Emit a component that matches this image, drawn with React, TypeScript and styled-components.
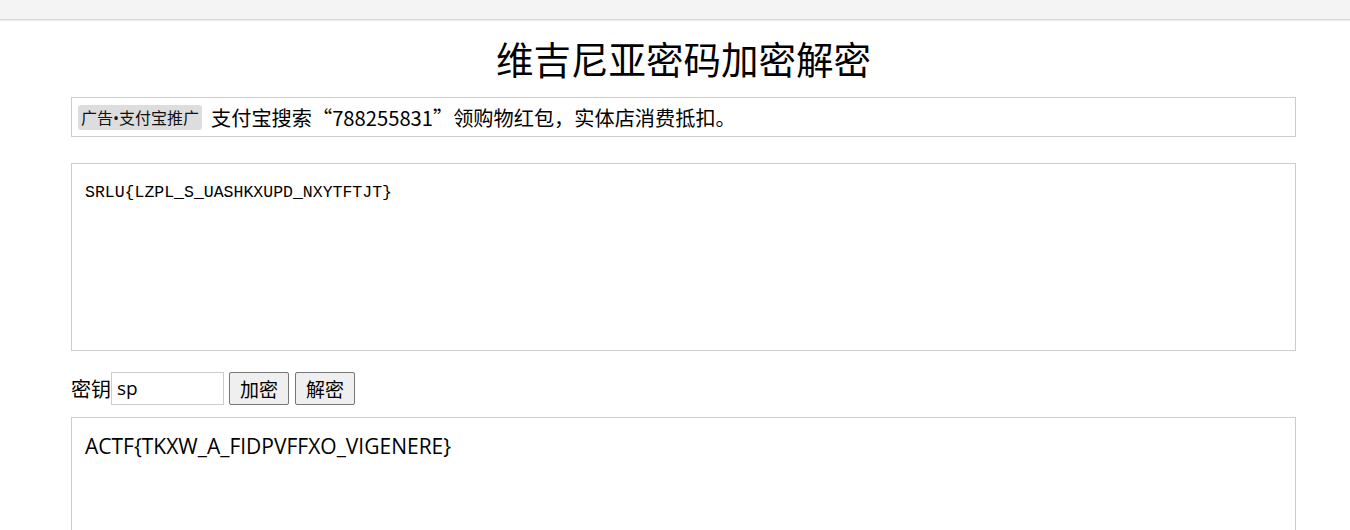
import React, { useState } from "react";
import styled, { createGlobalStyle } from "styled-components";

const GlobalStyle = createGlobalStyle`
  html, body { margin: 0; padding: 0; background: #fff; }
  body {
    font-family: "Noto Sans CJK SC", sans-serif;
    color: #000;
  }
`;

const TopBar = styled.div`
  height: 19px;
  background: #f4f4f4;
  border-bottom: 1px solid #d9d9d9;
  box-shadow: 0 1px 1px #eeeeee;
`;

const Container = styled.main`
  width: 1225px;
  margin-left: 71px;
  display: flex;
  flex-direction: column;
`;

const Title = styled.h1`
  margin: 8px 0 9px;
  height: 60px;
  font-family: "Noto Sans CJK SC", sans-serif;
  font-weight: 400;
  font-size: 37.5px;
  line-height: 60px;
  text-align: center;
`;

const AdBox = styled.div`
  height: 38px;
  border: 1px solid #cccccc;
  display: flex;
  align-items: center;
  padding: 0 6px;
  gap: 9px;
  font-family: "Noto Sans CJK SC", sans-serif;
  font-size: 20.2px;
  margin-bottom: 26px;
`;

const AdBadge = styled.span`
  background: #dddddd;
  border-radius: 3px;
  padding: 0 3px;
  height: 25px;
  display: flex;
  align-items: center;
  font-family: "Open Sans", "Noto Sans CJK SC", sans-serif;
  font-size: 16px;
  color: #111;
`;

const TextArea = styled.textarea<{ $serif?: boolean; $height: number }>`
  box-sizing: border-box;
  width: 1225px;
  height: ${(p) => p.$height}px;
  border: 1px solid #cccccc;
  padding: ${(p) => (p.$serif ? "18px 13px" : "14px 13px")};
  resize: none;
  outline: none;
  font-family: ${(p) =>
    p.$serif ? '"Liberation Mono", monospace' : '"Open Sans", "Noto Sans CJK SC", sans-serif'};
  font-size: ${(p) => (p.$serif ? "16.5px" : "21px")};
  line-height: ${(p) => (p.$serif ? "22px" : "28px")};
  color: #000;
  display: block;
`;

const KeyRow = styled.div`
  display: flex;
  align-items: center;
  height: 34px;
  margin: 20px 0 12px;
`;

const KeyLabel = styled.label`
  font-family: "Noto Sans CJK SC", sans-serif;
  font-size: 20px;
`;

const KeyInput = styled.input`
  box-sizing: border-box;
  width: 113px;
  height: 33px;
  border: 1px solid #cccccc;
  padding: 0 5px;
  font-family: "Open Sans", sans-serif;
  font-size: 19px;
  outline: none;
  margin-right: 5px;
`;

const Button = styled.button`
  box-sizing: border-box;
  width: 60px;
  height: 33px;
  margin-right: 6px;
  border: 1px solid #767676;
  border-radius: 2px;
  background: #efefef;
  font-family: "Noto Sans CJK SC", sans-serif;
  font-size: 19px;
  color: #000;
  padding: 0;
`;

export default function App() {
  const [input, setInput] = useState("SRLU{LZPL_S_UASHKXUPD_NXYTFTJT}");
  const [key, setKey] = useState("sp");
  const [output, setOutput] = useState("ACTF{TKXW_A_FIDPVFFXO_VIGENERE}");
  return (
    <>
      <GlobalStyle />
      <TopBar />
      <Container>
        <Title>维吉尼亚密码加密解密</Title>
        <AdBox>
          <AdBadge>广告•支付宝推广</AdBadge>
          <span>支付宝搜索“788255831”领购物红包，实体店消费抵扣。</span>
        </AdBox>
        <TextArea $serif $height={188} value={input} onChange={(e) => setInput(e.target.value)} />
        <KeyRow>
          <KeyLabel>密钥</KeyLabel>
          <KeyInput value={key} onChange={(e) => setKey(e.target.value)} />
          <Button>加密</Button>
          <Button>解密</Button>
        </KeyRow>
        <TextArea $height={188} value={output} onChange={(e) => setOutput(e.target.value)} />
      </Container>
    </>
  );
}
